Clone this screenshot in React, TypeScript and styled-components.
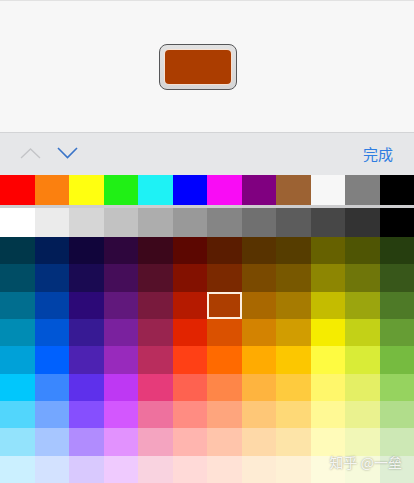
import React from 'react'
import styled, { createGlobalStyle } from 'styled-components'

const GlobalStyle = createGlobalStyle`
  html, body {
    margin: 0;
    padding: 0;
    background: #f7f7f7;
    font-family: "Noto Sans", "Noto Sans CJK SC", sans-serif;
  }
`

// 上方预览色
const picked = '#ab3d00'

// 第一行：基础色
const basic = [
  '#fe0000', '#fb800f', '#ffff10', '#20f015', '#1ef2f5', '#0000fe',
  '#f90cf5', '#800080', '#9c6233', '#f7f7f7', '#808080', '#000000',
]

// 网格：灰阶 + 9 行色阶
const grid: string[][] = [
  ['#ffffff', '#ebebeb', '#d6d6d6', '#c2c2c2', '#adadad', '#999999', '#858585', '#707070', '#5c5c5c', '#474747', '#333333', '#000000'],
  ['#00374a', '#011d57', '#11053b', '#2e063d', '#3c071b', '#5c0701', '#5a1c00', '#583300', '#563d00', '#666100', '#4f5504', '#263e0f'],
  ['#004d65', '#012f7b', '#1a0a52', '#450d59', '#551029', '#831100', '#7b2900', '#7a4a00', '#785800', '#8d8602', '#6f760a', '#38571a'],
  ['#016e8f', '#0042a9', '#2c0977', '#61187c', '#791a3d', '#b51a00', '#ad3e00', '#a96800', '#a67b01', '#c4bc00', '#9ba50e', '#4e7a27'],
  ['#008cb4', '#0056d6', '#371a94', '#7a219e', '#99244f', '#e22400', '#da5100', '#d38301', '#d19d01', '#f5ec00', '#c3d117', '#669d34'],
  ['#00a1d8', '#0061fe', '#4d22b2', '#982abc', '#b92d5d', '#ff4015', '#ff6a00', '#ffab01', '#fcc700', '#fefb41', '#d9ec37', '#76bb40'],
  ['#01c7fc', '#3a87fe', '#5e30eb', '#be38f3', '#e63b7a', '#fe6250', '#fe8648', '#feb43f', '#fecb3e', '#fff76b', '#e4ef65', '#96d35f'],
  ['#52d6fc', '#74a7ff', '#864ffe', '#d357fe', '#ee719e', '#ff8c82', '#fea57d', '#fec777', '#fed977', '#fff994', '#eaf28f', '#b1dd8b'],
  ['#93e3fc', '#a7c6ff', '#b18cfe', '#e292fe', '#f4a4c0', '#ffb5af', '#ffc5ab', '#fed9a8', '#fde4a8', '#fffbb9', '#f1f7b7', '#cde8b5'],
  ['#cbf0ff', '#d3e2ff', '#d9c9fe', '#efcafe', '#f9d3e0', '#ffdad8', '#ffe2d6', '#feecd4', '#fef1d5', '#fdfbdd', '#f6fadb', '#deeed4'],
]

const Page = styled.div`
  position: relative;
  width: 414px;
  height: 483px;
  overflow: hidden;
  display: flex;
  flex-direction: column;
`

const Preview = styled.div`
  height: 131px;
  border-top: 1px solid #e2e2e2;
  border-bottom: 1px solid #d3d4d6;
  background: #f7f7f7;
  display: flex;
  align-items: center;
  justify-content: center;
  padding-right: 18px;
`

const SwatchFrame = styled.div`
  box-sizing: border-box;
  width: 78px;
  height: 46px;
  border: 1.5px solid #555658;
  border-radius: 8px;
  background: linear-gradient(#e2e2e2, #d6d6d6);
  display: flex;
  align-items: center;
  justify-content: center;
`

const SwatchFill = styled.div<{ $color: string }>`
  width: 66px;
  height: 34px;
  border-radius: 4px;
  background: ${p => p.$color};
  box-shadow: 0 0 0 1px rgba(255, 225, 205, 0.75);
`

const Toolbar = styled.div`
  height: 42px;
  background: #e6e7e9;
  display: flex;
  align-items: center;
  padding: 0 21px 0 20px;
  gap: 16px;
`

const Arrow = styled.svg`
  width: 21px;
  height: 12px;
  margin-top: -2px;
`

const Done = styled.span`
  margin-left: auto;
  font-family: "Noto Sans CJK SC", sans-serif;
  font-size: 15px;
  color: #2f7de1;
  line-height: 1;
  margin-top: -2px;
`

const BasicRow = styled.div`
  display: grid;
  grid-template-columns: repeat(12, 1fr);
  height: 30px;
  border-bottom: 3px solid #cdcdcf;
`

const Cell = styled.div<{ $color: string; $selected?: boolean }>`
  background: ${p => p.$color};
  box-shadow: ${p => (p.$selected ? 'inset 0 0 0 2px #fdeedd' : 'none')};
`

const Grid = styled.div`
  flex: 1;
  display: grid;
  grid-template-columns: repeat(12, 1fr);
  grid-template-rows: 29px repeat(9, 1fr);
`

const Watermark = styled.span`
  position: absolute;
  right: 12px;
  bottom: 11px;
  font-family: "Noto Sans CJK SC", sans-serif;
  font-size: 14px;
  color: rgba(255, 255, 255, 0.9);
  text-shadow: 0 0 2px rgba(0, 0, 0, 0.45);
`

export default function App() {
  const [sel, setSel] = React.useState<[number, number]>([3, 6])
  const current = grid[sel[0]][sel[1]] === '#ad3e00' ? picked : grid[sel[0]][sel[1]]

  return (
    <Page>
      <GlobalStyle />
      <Preview>
        <SwatchFrame>
          <SwatchFill $color={current} />
        </SwatchFrame>
      </Preview>
      <Toolbar>
        <Arrow viewBox="0 0 21 12">
          <polyline points="1,11 10.5,2 20,11" fill="none" stroke="#c3c4c7" strokeWidth="1.3" />
        </Arrow>
        <Arrow viewBox="0 0 21 12">
          <polyline points="1,1 10.5,10.5 20,1" fill="none" stroke="#3a74c8" strokeWidth="1.6" />
        </Arrow>
        <Done>完成</Done>
      </Toolbar>
      <BasicRow>
        {basic.map(c => (
          <Cell key={c} $color={c} />
        ))}
      </BasicRow>
      <Grid>
        {grid.map((row, r) =>
          row.map((c, i) => (
            <Cell
              key={r + '-' + i}
              $color={c}
              $selected={sel[0] === r && sel[1] === i}
              onClick={() => setSel([r, i])}
            />
          )),
        )}
      </Grid>
      <Watermark>知乎 @一垒</Watermark>
    </Page>
  )
}
